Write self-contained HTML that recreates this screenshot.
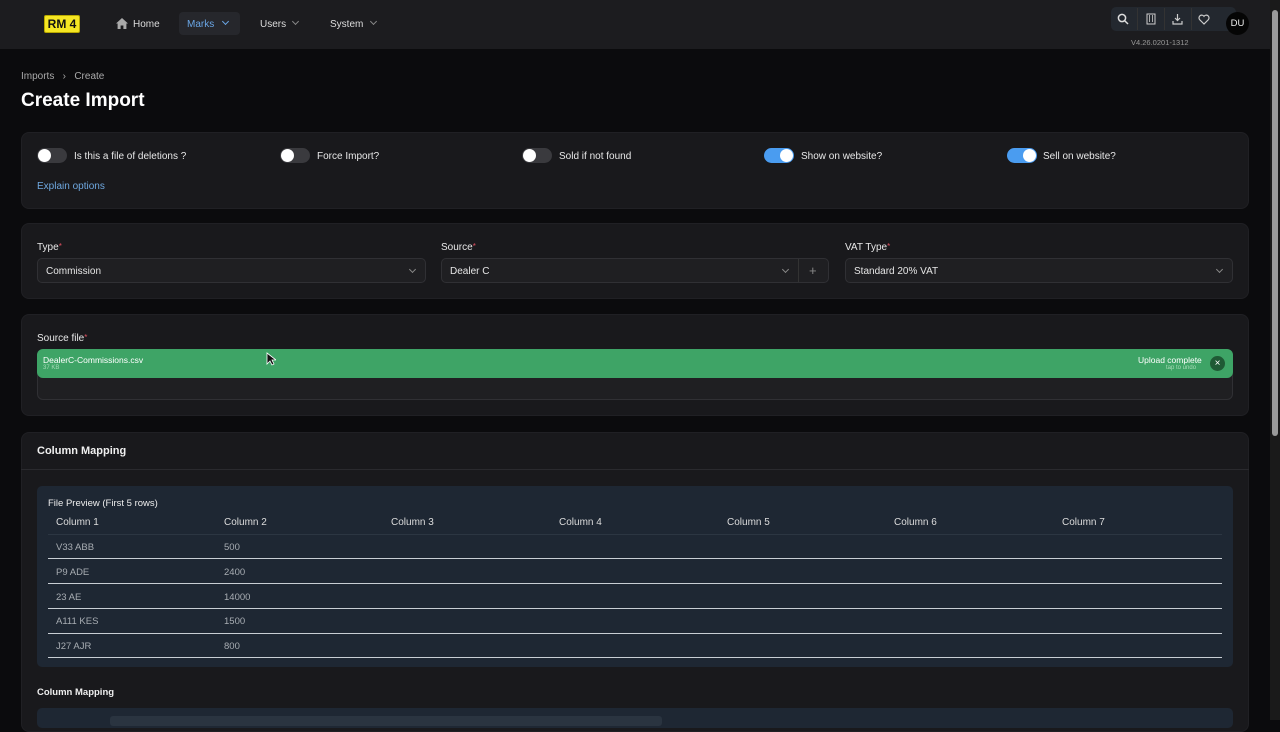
<!DOCTYPE html>
<html><head><meta charset="utf-8"><style>
*{box-sizing:border-box;margin:0;padding:0}
body{width:1280px;height:720px;overflow:hidden;background:#0b0b0d;font-family:"Liberation Sans",sans-serif;color:#e6e6e6;position:relative;font-size:10px}
.a{position:absolute}
.t{margin-top:1px}
.hdr{left:0;top:0;width:1270px;height:49px;background:#1c1c1f}
.card{background:#19191c;border-radius:8px;border:1px solid #202024}
.tg{width:30px;height:15px;border-radius:8px;background:#3a3a3e}
.tg i{position:absolute;left:1px;top:1px;width:13px;height:13px;border-radius:50%;background:#fff}
.tg.on{background:#4a9cf0}.tg.on i{left:16px}
.lbl{font-size:10px;color:#e8e8e8;margin-top:1px}
.sel{background:#1f1f22;border:1px solid #303034;border-radius:5px;height:25px;font-size:10px;color:#e6e6e6;padding:7px 8px}
.chev{position:absolute;width:5px;height:5px;border-right:1px solid #888;border-bottom:1px solid #888;transform:rotate(45deg)}
.req{color:#e05060;font-size:8px;vertical-align:top}
.th{font-size:10px;color:#dcdcdc;margin-top:1px}
.td{font-size:9.5px;color:#a8adb3;margin-top:1px}
.ln{left:48px;width:1174px;height:1px;background:#c8ced4}
</style></head><body>
<div class="a hdr"></div>
<div class="a" style="left:44px;top:15px;width:36px;height:18px;background:#f5e623;border:1px solid #b8a800;border-radius:2px;color:#111;font-weight:bold;font-size:12px;text-align:center;line-height:16px">RM 4</div>
<svg class="a" style="left:116px;top:18px" width="12" height="11" viewBox="0 0 12 11"><path d="M6 0L0 5.5h1.6V11h3V7.5h2.8V11h3V5.5H12z" fill="#aaa"/></svg>
<div class="a t" style="left:133px;top:18px;font-size:10px;color:#ddd">Home</div>
<div class="a" style="left:179px;top:12px;width:61px;height:23px;background:#26272c;border-radius:4px"></div>
<div class="a t" style="left:187px;top:18px;font-size:10px;color:#6aa6e6">Marks</div>
<div class="chev" style="left:223px;top:19px;border-color:#6aa6e6"></div>
<div class="a t" style="left:260px;top:18px;font-size:10px;color:#ddd">Users</div>
<div class="chev" style="left:293px;top:19px"></div>
<div class="a t" style="left:330px;top:18px;font-size:10px;color:#ddd">System</div>
<div class="chev" style="left:371px;top:19px"></div>
<div class="a" style="left:1111px;top:7px;width:125px;height:24px;background:#23282f;border-radius:5px"></div>
<div class="a" style="left:1137px;top:8px;width:1px;height:22px;background:#333"></div>
<div class="a" style="left:1164px;top:8px;width:1px;height:22px;background:#333"></div>
<div class="a" style="left:1191px;top:8px;width:1px;height:22px;background:#333"></div>
<svg class="a" style="left:1117px;top:13px" width="12" height="12"><circle cx="5" cy="5" r="3.6" stroke="#ddd" stroke-width="1.5" fill="none"/><path d="M7.6 7.6L11 11" stroke="#ddd" stroke-width="1.5"/></svg>
<svg class="a" style="left:1146px;top:13px" width="10" height="12"><rect x="1" y="1" width="8" height="10" stroke="#ccc" fill="none"/><path d="M3.5 2v7M6.5 2v7" stroke="#ccc" stroke-width=".8"/></svg>
<svg class="a" style="left:1172px;top:13px" width="11" height="12"><path d="M5.5 1v6M3 5l2.5 2.5L8 5M1 8v3h9V8" stroke="#ccc" stroke-width="1.2" fill="none"/></svg>
<svg class="a" style="left:1198px;top:14px" width="12" height="11"><path d="M6 10L1.5 5.5A2.5 2.5 0 0 1 6 2.3 2.5 2.5 0 0 1 10.5 5.5z" stroke="#ccc" stroke-width="1.2" fill="none"/></svg>
<div class="a" style="left:1131px;top:38px;font-size:7.5px;color:#999">V4.26.0201-1312</div>
<div class="a" style="left:1226px;top:12px;width:23px;height:23px;border-radius:50%;background:#050505;color:#eee;font-size:9.5px;text-align:center;line-height:23px">DU</div>
<div class="a" style="left:1270px;top:0;width:10px;height:720px;background:#1a1a1a"></div>
<div class="a" style="left:1272px;top:10px;width:6px;height:426px;background:#9a9a9a;border-radius:3px"></div>

<div class="a t" style="left:21px;top:70px;font-size:10px;color:#aaa">Imports &nbsp;&nbsp;›&nbsp;&nbsp; Create</div>
<div class="a t" style="left:21px;top:89px;font-size:19px;font-weight:bold;color:#fff">Create Import</div>

<div class="a card" style="left:21px;top:132px;width:1228px;height:77px"></div>
<div class="a tg" style="left:37px;top:148px"><i></i></div><div class="a lbl" style="left:74px;top:150px">Is this a file of deletions ?</div>
<div class="a tg" style="left:280px;top:148px"><i></i></div><div class="a lbl" style="left:317px;top:150px">Force Import?</div>
<div class="a tg" style="left:522px;top:148px"><i></i></div><div class="a lbl" style="left:559px;top:150px">Sold if not found</div>
<div class="a tg on" style="left:764px;top:148px"><i></i></div><div class="a lbl" style="left:801px;top:150px">Show on website?</div>
<div class="a tg on" style="left:1007px;top:148px"><i></i></div><div class="a lbl" style="left:1043px;top:150px">Sell on website?</div>
<div class="a t" style="left:37px;top:180px;font-size:10px;color:#6fa8e0">Explain options</div>

<div class="a card" style="left:21px;top:223px;width:1228px;height:76px"></div>
<div class="a lbl" style="left:37px;top:241px">Type<span class="req">*</span></div>
<div class="a sel" style="left:37px;top:258px;width:389px">Commission</div><div class="chev" style="left:410px;top:267px"></div>
<div class="a lbl" style="left:441px;top:241px">Source<span class="req">*</span></div>
<div class="a sel" style="left:441px;top:258px;width:388px">Dealer C</div><div class="chev" style="left:783px;top:267px"></div>
<div class="a" style="left:798px;top:259px;width:1px;height:23px;background:#333"></div>
<div class="a" style="left:809px;top:263px;font-size:13px;color:#888">+</div>
<div class="a lbl" style="left:845px;top:241px">VAT Type<span class="req">*</span></div>
<div class="a sel" style="left:845px;top:258px;width:388px">Standard 20% VAT</div><div class="chev" style="left:1217px;top:267px"></div>

<div class="a card" style="left:21px;top:314px;width:1228px;height:102px"></div>
<div class="a lbl" style="left:37px;top:332px">Source file<span class="req">*</span></div>
<div class="a" style="left:37px;top:349px;width:1196px;height:51px;background:#1f1f22;border:1px solid #303034;border-radius:6px"></div>
<div class="a" style="left:37px;top:349px;width:1196px;height:29px;background:#3ea466;border-radius:6px"></div>
<div class="a" style="left:43px;top:355px;font-size:8.5px;color:#fff">DealerC-Commissions.csv</div>
<div class="a" style="left:43px;top:365px;font-size:6px;color:#a8dcb8">37 KB</div>
<div class="a" style="left:1138px;top:355px;font-size:8.5px;color:#fff">Upload complete</div>
<div class="a" style="left:1166px;top:365px;font-size:6px;color:#a8dcb8">tap to undo</div>
<div class="a" style="left:1210px;top:356px;width:15px;height:15px;border-radius:50%;background:#1f5a35;color:#fff;font-size:10px;text-align:center;line-height:15px">×</div>
<svg class="a" style="left:266px;top:352px" width="10" height="14"><path d="M1 1v11l3-3 2 4 2-1-2-4h4z" fill="#111" stroke="#fff" stroke-width=".8"/></svg>

<div class="a card" style="left:21px;top:432px;width:1228px;height:300px"></div>
<div class="a" style="left:21px;top:469px;width:1228px;height:1px;background:#2a2a2e"></div>
<div class="a t" style="left:37px;top:444px;font-size:11px;font-weight:bold;color:#f0f0f0">Column Mapping</div>
<div class="a" style="left:37px;top:486px;width:1196px;height:181px;background:#1e2733;border-radius:5px"></div>
<div class="a t" style="left:48px;top:497px;font-size:9.5px;color:#eee">File Preview (First 5 rows)</div>
<div class="a th" style="left:56px;top:516px">Column 1</div>
<div class="a th" style="left:224px;top:516px">Column 2</div>
<div class="a th" style="left:391px;top:516px">Column 3</div>
<div class="a th" style="left:559px;top:516px">Column 4</div>
<div class="a th" style="left:727px;top:516px">Column 5</div>
<div class="a th" style="left:894px;top:516px">Column 6</div>
<div class="a th" style="left:1062px;top:516px">Column 7</div>
<div class="a" style="left:48px;top:534px;width:1174px;height:1px;background:#2c3642"></div>
<div class="a td" style="left:56px;top:541px">V33 ABB</div><div class="a td" style="left:224px;top:541px">500</div><div class="a ln" style="top:558px"></div>
<div class="a td" style="left:56px;top:566px">P9 ADE</div><div class="a td" style="left:224px;top:566px">2400</div><div class="a ln" style="top:583px"></div>
<div class="a td" style="left:56px;top:591px">23 AE</div><div class="a td" style="left:224px;top:591px">14000</div><div class="a ln" style="top:608px"></div>
<div class="a td" style="left:56px;top:615px">A111 KES</div><div class="a td" style="left:224px;top:615px">1500</div><div class="a ln" style="top:633px"></div>
<div class="a td" style="left:56px;top:640px">J27 AJR</div><div class="a td" style="left:224px;top:640px">800</div><div class="a ln" style="top:657px"></div>
<div class="a t" style="left:37px;top:686px;font-size:9.5px;font-weight:bold;color:#eee">Column Mapping</div>
<div class="a" style="left:37px;top:708px;width:1196px;height:20px;background:#1e2733;border-radius:5px"></div>
<div class="a" style="left:110px;top:716px;width:552px;height:10px;background:#2a3440;border-radius:3px"></div>
</body></html>
